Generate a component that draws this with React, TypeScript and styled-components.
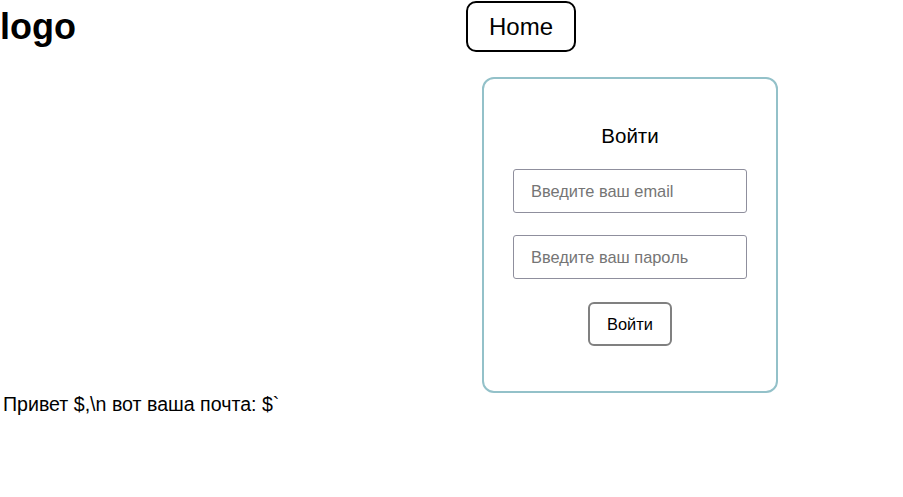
import React from "react";
import styled, { createGlobalStyle } from "styled-components";

const Global = createGlobalStyle`
  html, body { margin: 0; padding: 0; background: #ffffff; }
  body { font-family: Arial, "Liberation Sans", Helvetica, sans-serif; color: #000; }
  * { box-sizing: border-box; }
`;

const Page = styled.div`
  width: 903px;
  min-height: 497px;
  display: flex;
  flex-direction: column;
`;

const Header = styled.header`
  display: grid;
  grid-template-columns: 466px auto;
  align-items: start;
`;

const Logo = styled.h1`
  margin: 6px 0 0 0;
  font-size: 36px;
  font-weight: 700;
  line-height: normal;
`;

const NavButton = styled.button`
  justify-self: start;
  margin-top: 1px;
  height: 51px;
  font-family: inherit;
  font-size: 24px;
  line-height: normal;
  color: #000;
  background: #fff;
  border: 2px solid #000;
  border-radius: 10px;
  padding: 0 21px;
  cursor: pointer;
`;

const Main = styled.main`
  display: flex;
  padding-left: 482px;
  margin-top: 25px;
`;

const Card = styled.form`
  width: 296px;
  height: 316px;
  border: 2px solid #93c1c9;
  border-radius: 12px;
  padding: 45px 29px 0;
  display: flex;
  flex-direction: column;
  align-items: center;
  gap: 22px;
`;

const Title = styled.h2`
  margin: 0;
  font-size: 20.5px;
  font-weight: 400;
  line-height: 23px;
`;

const Field = styled.input`
  width: 100%;
  height: 44px;
  padding: 0 17px;
  font-family: inherit;
  font-size: 16.4px;
  border: 1px solid #8f8f9d;
  border-radius: 3px;
  outline: none;
  &::placeholder { color: #757575; }
`;

const Submit = styled.button`
  margin-top: 1px;
  height: 44px;
  font-family: inherit;
  font-size: 16.4px;
  line-height: normal;
  color: #000;
  background: #fff;
  border: 2px solid #808080;
  border-radius: 6px;
  padding: 0 17px;
  cursor: pointer;
`;

const Greeting = styled.p`
  margin: 0 0 0 3px;
  font-size: 19.6px;
  line-height: normal;
`;

export default function App() {
  return (
    <>
      <Global />
      <Page>
        <Header>
          <Logo>logo</Logo>
          <NavButton type="button">Home</NavButton>
        </Header>
        <Main>
          <Card onSubmit={(e) => e.preventDefault()}>
            <Title>Войти</Title>
            <Field type="email" placeholder="Введите ваш email" />
            <Field type="password" placeholder="Введите ваш пароль" />
            <Submit type="submit">Войти</Submit>
          </Card>
        </Main>
        <Greeting>{"Привет $,\\n вот ваша почта: $`"}</Greeting>
      </Page>
    </>
  );
}
